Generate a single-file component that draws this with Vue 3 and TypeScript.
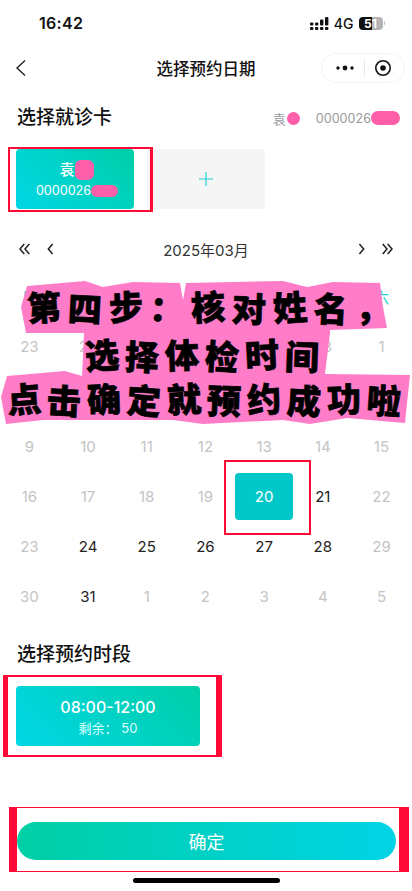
<script setup lang="ts">
interface Day { n: number; on?: boolean; sel?: boolean }
interface Glyph { c: string; r: number; y: number }
const weekNames: string[] = ['日', '一', '二', '三', '四', '五', '六']
const activeDays = [21, 24, 25, 26, 27, 28, 31]
const seq: [number, boolean][] = []
for (const n of [23, 24, 25, 26, 27, 28]) seq.push([n, false])
for (let n = 1; n <= 31; n++) seq.push([n, true])
for (let n = 1; n <= 5; n++) seq.push([n, false])
const days: Day[] = seq.map(([n, cur]) => ({
  n,
  on: cur && activeDays.includes(n),
  sel: cur && n === 20,
}))
const blob = '27,286 85,281 103,287 133,282 180,283 183,300 186,283 283,281 307,287 333,282 380,283 383,307 387,328 330,330 330,333 325,374 410,375 405,423 347,418 310,424 283,420 203,424 173,420 87,420 43,420 6,424 1,397 7,376 65,371 82,376 84,333 26,333 21,307'
const tilt = [-4, 3, -2, 4, -3, 2, -4, 3, -2, 4]
const toGlyphs = (s: string): Glyph[] =>
  [...s].map((c, i) => ({ c, r: tilt[i % tilt.length], y: i % 2 ? 1 : -1 }))
const sayLines = [
  { id: 'say-1', glyphs: toGlyphs('第四步：核对姓名，') },
  { id: 'say-2', glyphs: toGlyphs('选择体检时间') },
  { id: 'say-3', glyphs: toGlyphs('点击确定就预约成功啦') },
]
</script>

<template>
  <div class="page">
    <div class="status">
      <span class="time">16:42</span>
      <div class="status-right">
        <svg class="signal" width="19" height="13" viewBox="0 0 19 13">
          <g fill="#111">
            <rect x="0" y="5.5" width="3.4" height="3" rx="1" /><rect x="0" y="10" width="3.4" height="3" rx="1" />
            <rect x="5" y="5.5" width="3.4" height="3" rx="1" /><rect x="5" y="10" width="3.4" height="3" rx="1" />
            <rect x="10" y="2.5" width="3.4" height="6" rx="1" /><rect x="10" y="10" width="3.4" height="3" rx="1" />
            <rect x="15" y="0" width="3.4" height="8.5" rx="1" /><rect x="15" y="10" width="3.4" height="3" rx="1" />
          </g>
        </svg>
        <span class="net">4G</span>
        <div class="battery">
          <div class="b-body">
            <span class="b-num">51</span>
          </div>
          <i class="b-nub"></i>
        </div>
      </div>
    </div>

    <div class="nav">
      <svg class="back" width="12" height="18" viewBox="0 0 12 18">
        <path d="M10 1.5 2 9l8 7.5" fill="none" stroke="#222" stroke-width="1.4" />
      </svg>
      <span class="nav-title">选择预约日期</span>
      <div class="capsule">
        <svg width="20" height="8" viewBox="0 0 20 8">
          <circle cx="3" cy="4" r="1.7" fill="#111" /><circle cx="10" cy="4" r="2.4" fill="#111" /><circle cx="17" cy="4" r="1.7" fill="#111" />
        </svg>
        <i class="cap-sep"></i>
        <svg width="18" height="18" viewBox="0 0 18 18">
          <circle cx="9" cy="9" r="7.2" fill="none" stroke="#111" stroke-width="1.6" /><circle cx="9" cy="9" r="2.8" fill="#111" />
        </svg>
      </div>
    </div>

    <div class="head">
      <h2 class="title">选择就诊卡</h2>
      <div class="who">
        <span class="who-name">袁<i class="smear smear-a"></i></span>
        <span class="who-no">0000026<i class="smear smear-b"></i></span>
      </div>
    </div>

    <div class="cards">
      <div class="card">
        <span class="card-name">袁<i class="smear smear-c"></i></span>
        <span class="card-no">0000026<i class="smear smear-d"></i></span>
      </div>
      <div class="add">
        <svg width="14" height="14" viewBox="0 0 14 14">
          <path d="M7 0v14M0 7h14" stroke="#22d3d3" stroke-width="1.2" fill="none" />
        </svg>
      </div>
    </div>

    <div class="cal-head">
      <div class="arrows">
        <svg width="11" height="12" viewBox="0 0 11 12"><path d="M5.3 1 1 6l4.3 5M10.3 1 6 6l4.3 5" fill="none" stroke="#222" stroke-width="1.5" /></svg>
        <svg class="single-l" width="7" height="12" viewBox="0 0 7 12"><path d="M5.6 1 1.3 6l4.3 5" fill="none" stroke="#222" stroke-width="1.5" /></svg>
      </div>
      <span class="month">2025年03月</span>
      <div class="arrows">
        <svg class="single-r" width="7" height="12" viewBox="0 0 7 12"><path d="M1.4 1l4.3 5-4.3 5" fill="none" stroke="#222" stroke-width="1.5" /></svg>
        <svg width="11" height="12" viewBox="0 0 11 12"><path d="M.7 1 5 6l-4.3 5M5.7 1 10 6l-4.3 5" fill="none" stroke="#222" stroke-width="1.5" /></svg>
      </div>
    </div>

    <div class="grid">
      <div v-for="w in weekNames" :key="w" class="cell week">{{ w }}</div>
      <div
        v-for="(d, i) in days"
        :key="i"
        class="cell"
        :class="{ on: d.on, sel: d.sel }"
      >
        <span v-if="d.sel" class="sel-box">{{ d.n }}</span>
        <template v-else>{{ d.n }}</template>
      </div>
    </div>

    <h2 class="title title-time">选择预约时段</h2>
    <div class="slot">
      <span class="slot-time">08:00-12:00</span>
      <span class="slot-left">剩余： 50</span>
    </div>

    <div class="footer">
      <button class="confirm">确定</button>
    </div>

    <i class="home"></i>

    <i class="mark mark-card"></i>
    <i class="mark mark-date"></i>
    <i class="mark mark-slot"></i>
    <i class="mark mark-btn"></i>

    <svg class="banner" width="412" height="891" viewBox="0 0 412 891">
      <polygon :points="blob" fill="#ff7cc8" />
    </svg>
    <div v-for="line in sayLines" :key="line.id" class="say" :class="line.id">
      <span
        v-for="(g, i) in line.glyphs"
        :key="i"
        class="glyph"
        :style="{ transform: `translateY(${g.y}px) rotate(${g.r}deg)` }"
      >{{ g.c }}</span>
    </div>
  </div>
</template>

<style>
html, body { margin: 0; background: #fff; }
</style>

<style scoped>
.page {
  position: relative;
  width: 412px;
  height: 891px;
  overflow: hidden;
  display: flex;
  flex-direction: column;
  background: #fff;
  color: #111;
  font-family: Inter, "Noto Sans CJK SC", sans-serif;
}
.status {
  height: 46px;
  flex: none;
  display: flex;
  align-items: center;
  justify-content: space-between;
  padding: 0 27px 0 39px;
}
.time { font-size: 16px; font-weight: 600; letter-spacing: 0.3px; }
.status-right { display: flex; align-items: center; gap: 5px; }
.net { font-size: 14px; font-weight: 500; }
.battery { display: flex; align-items: center; gap: 1px; }
.b-body {
  width: 24px;
  height: 13px;
  border-radius: 4px;
  overflow: hidden;
  text-align: center;
  background: linear-gradient(90deg, #111 0 54%, #b5b5b5 54% 100%);
}
.b-num {
  display: block;
  font-size: 12px;
  font-weight: 700;
  line-height: 13px;
  color: #fff;
}
.b-nub { width: 1.5px; height: 4px; background: #bbb; border-radius: 0 1px 1px 0; }
.nav {
  position: relative;
  height: 44px;
  flex: none;
  display: flex;
  align-items: center;
  justify-content: space-between;
  padding: 0 7px 0 15px;
}
.nav-title {
  position: absolute;
  left: 0;
  right: 0;
  text-align: center;
  font-size: 16.5px;
  font-weight: 500;
}
.capsule {
  width: 84px;
  height: 30px;
  box-sizing: border-box;
  display: flex;
  align-items: center;
  justify-content: space-between;
  padding: 0 12px 0 13px;
  border: 1px solid #f3f3f3;
  border-radius: 15px;
}
.cap-sep { width: 1px; height: 18px; background: #e8e8e8; }
.head {
  height: 28px;
  margin-top: 14px;
  flex: none;
  display: flex;
  align-items: center;
  justify-content: space-between;
  padding: 0 12px 0 17px;
}
.title {
  margin: 0;
  font-size: 19px;
  line-height: 28px;
  font-weight: 500;
  color: #111;
}
.who { display: flex; gap: 16px; font-size: 13px; color: #999; }
.who-name, .who-no, .card-name, .card-no { display: inline-flex; align-items: center; }
.who-no { font-size: 12.6px; }
.smear { display: inline-block; background: #ff5fa8; }
.smear-a { width: 13px; height: 13px; border-radius: 50%; margin-left: 1px; filter: blur(0.5px); }
.smear-b { width: 29px; height: 14px; border-radius: 7px; filter: blur(0.5px); }
.smear-c { width: 19px; height: 20px; border-radius: 6px; }
.smear-d { width: 27px; height: 12px; border-radius: 6px; }
.cards {
  margin: 17px 0 0 16px;
  display: flex;
  gap: 13px;
  flex: none;
}
.card, .add {
  width: 118px;
  height: 60px;
  border-radius: 4px;
  flex: none;
}
.card {
  display: flex;
  flex-direction: column;
  align-items: center;
  justify-content: center;
  gap: 1px;
  color: #fff;
  background: linear-gradient(45deg, #00d6e6, #00cfa8);
}
.card-name { font-size: 15px; line-height: 22px; font-weight: 500; padding-left: 3px; }
.card-no { font-size: 12.6px; line-height: 18px; padding-left: 4px; }
.add {
  display: flex;
  align-items: center;
  justify-content: center;
  background: #f5f5f5;
}
.cal-head {
  position: relative;
  height: 20px;
  margin-top: 30px;
  flex: none;
  display: flex;
  align-items: center;
  justify-content: space-between;
  padding: 0 19px;
}
.month {
  position: absolute;
  left: 0;
  right: 0;
  text-align: center;
  font-size: 15px;
  color: #333;
}
.arrows { display: flex; align-items: center; gap: 17px; }
.grid {
  margin-top: 12px;
  display: grid;
  grid-template-columns: repeat(7, 58.7px);
  grid-auto-rows: 50px;
  flex: none;
}
.cell {
  display: flex;
  align-items: center;
  justify-content: center;
  font-size: 15px;
  color: #c4c4c4;
}
.week { color: #22d3d3; }
.on { color: #222; }
.sel-box {
  width: 59px;
  height: 47px;
  display: flex;
  align-items: center;
  justify-content: center;
  border-radius: 4px;
  color: #fff;
  background: #00c8c8;
}
.title-time { margin: 20px 0 0 17px; flex: none; }
.slot {
  margin: 17px 0 0 16px;
  width: 184px;
  height: 60px;
  flex: none;
  border-radius: 4px;
  display: flex;
  flex-direction: column;
  align-items: center;
  justify-content: center;
  color: #fff;
  background: linear-gradient(45deg, #00d6e6, #00cfa8);
}
.slot-time { font-size: 16px; line-height: 24px; font-weight: 500; }
.slot-left { font-size: 13px; line-height: 18px; color: #dff; }
.footer { margin-top: auto; padding: 0 16px 31px 17px; flex: none; }
.confirm {
  display: block;
  width: 100%;
  height: 38px;
  border: 0;
  border-radius: 19px;
  padding: 0;
  color: #fff;
  font-family: inherit;
  font-size: 18px;
  background: linear-gradient(90deg, #00cfa5, #00d3e6);
}
.home {
  position: absolute;
  left: 133px;
  top: 878px;
  width: 147px;
  height: 5px;
  border-radius: 3px;
  background: #000;
}
.mark {
  position: absolute;
  box-sizing: border-box;
  border-style: solid;
  border-color: #ff0a36;
}
.mark-card { left: 8px; top: 147px; width: 145px; height: 65px; border-width: 2px 3px 2px 2px; }
.mark-date { left: 224px; top: 460px; width: 87px; height: 75px; border-width: 2px; }
.mark-slot { left: 3px; top: 675px; width: 219px; height: 82px; border-width: 2px 6px 2px 5px; }
.mark-btn { left: 9px; top: 807px; width: 400px; height: 65px; border-width: 1.5px 10px 1.5px 8px; }
.banner { position: absolute; left: 0; top: 0; pointer-events: none; }
.say {
  position: absolute;
  display: flex;
  white-space: nowrap;
  color: #000;
  font-family: "Noto Sans CJK SC", sans-serif;
  font-weight: 900;
  font-size: 34px;
  line-height: 40px;
  -webkit-text-stroke: 0.7px #000;
}
.glyph { display: block; width: 40px; flex: none; }
.say-1 { left: 27px; top: 287px; }
.say-1 .glyph { width: 41px; }
.say-2 { left: 85px; top: 335px; }
.say-3 { left: 7px; top: 379px; }
</style>
